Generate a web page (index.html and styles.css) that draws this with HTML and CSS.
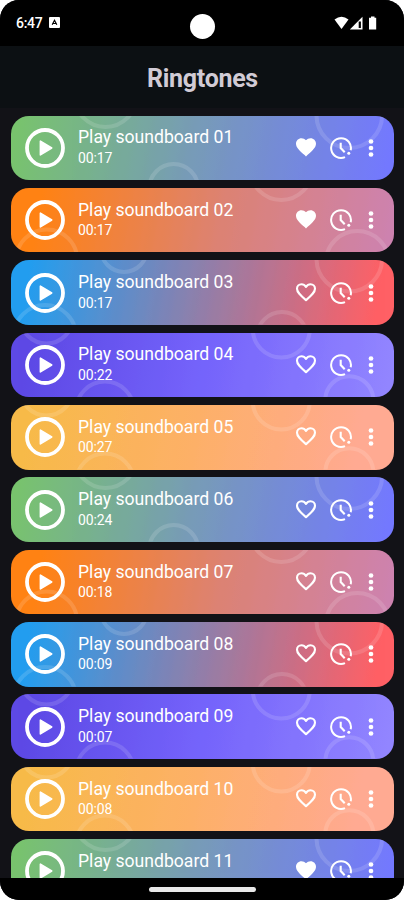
FILE: index.html
```html
<!DOCTYPE html>
<html lang="en">
<head>
<meta charset="utf-8">
<title>Ringtones</title>
<link rel="stylesheet" href="styles.css">
</head>
<body>
<svg class="defs" width="0" height="0">
  <symbol id="play" viewBox="0 0 40 40"><circle cx="20" cy="20" r="18" fill="none" stroke="#fff" stroke-width="3.8"/><path d="M15.400 13.100v13.800L26.700 20z" fill="#fff" stroke="#fff" stroke-width="1.600" stroke-linejoin="round"/></symbol>
  <symbol id="heart" viewBox="0 0 24 24"><path d="M12 20.400 10.600 19.100C5.400 14.500 2 11.400 2 7.700 2 4.600 4.400 2.200 7.500 2.200c1.700 0 3.400.8 4.500 2.100 1.100-1.300 2.800-2.100 4.500-2.100 3.100 0 5.500 2.400 5.500 5.500 0 3.700-3.400 6.800-8.600 11.400z" fill="#fff"/></symbol>
  <symbol id="heart-o" viewBox="0 0 24 24"><path d="M12 19.200C6.200 14.100 3 11.300 3 7.700c0-2.600 2-4.500 4.500-4.500 1.800 0 3.500 1.100 4.500 2.700 1-1.600 2.700-2.700 4.500-2.700C19 3.200 21 5.100 21 7.700c0 3.600-3.200 6.400-9 11.500z" fill="none" stroke="#fff" stroke-width="2.100" stroke-linejoin="round"/></symbol>
  <symbol id="clock" viewBox="0 0 24 24"><path d="M16 21.100A9.900 9.900 0 1 1 21.700 14.200" fill="none" stroke="#fff" stroke-width="2"/><path d="M11.700 6.700V12l4 4.200" fill="none" stroke="#fff" stroke-width="2.100"/><circle cx="19.800" cy="17.300" r="1.500" fill="#fff"/></symbol>
  <symbol id="more" viewBox="0 0 8 20"><g fill="#fff"><circle cx="4" cy="3.500" r="2.350"/><circle cx="4" cy="10" r="2.350"/><circle cx="4" cy="16.500" r="2.350"/></g></symbol>
  <symbol id="rings-green" viewBox="0 0 383 64.5"><circle cx="94.500" cy="-20" r="31"/><circle cx="162.700" cy="72.600" r="24.500"/><circle cx="338.300" cy="-.8" r="32.800"/></symbol>
  <symbol id="rings-orange" viewBox="0 0 383 64.5"><circle cx="270.300" cy="-19" r="31"/><circle cx="35.700" cy="72" r="30.500"/><circle cx="346.300" cy="74.500" r="31.500"/></symbol>
  <symbol id="rings-blue" viewBox="0 0 383 64.5"><circle cx="113" cy="-11" r="23"/><circle cx="34" cy="76" r="31"/><circle cx="271" cy="77" r="25"/><circle cx="338.300" cy="-1.200" r="32.800"/></symbol>
  <symbol id="rings-soft" viewBox="0 0 383 64.5"><circle cx="35.500" cy="-16" r="26.500"/><circle cx="94" cy="77.600" r="29"/><circle cx="270.300" cy="-4" r="28.500"/><circle cx="338.300" cy="67.200" r="24"/></symbol>
</svg>
<div class="phone">
  <div class="status">
    <div class="left"><span class="time">6:47</span>
      <svg width="11" height="11" viewBox="0 0 11 11"><rect width="11" height="11" rx="1" fill="#fff"/><path d="M3.200 7.800 5.500 3.300 7.800 7.800M4 6.500h3" fill="none" stroke="#000" stroke-width="1.200"/></svg>
    </div>
    <div class="camera"></div>
    <svg class="signals" width="44" height="14" viewBox="0 0 44 14"><path d="M.5 3.600Q7.500-2 14.500 3.600L7.500 13z" fill="#fff"/><path d="M28.500.8V13.500H15.800z" fill="#fff"/><path d="M24.700 5.500h2.200v6.500h-2.200z" fill="#000"/><path d="M37 .5h3.500v1.300h1.700V13.500h-7.200V1.800h2z" fill="#fff"/></svg>
  </div>
  <header class="header"><h1>Ringtones</h1></header>
  <main class="list">
    <article class="card green"><svg class="rings"><use href="#rings-green"/></svg><svg class="play"><use href="#play"/></svg><div class="info"><div class="name">Play soundboard 01</div><div class="length">00:17</div></div><svg class="heart"><use href="#heart"/></svg><svg class="clock"><use href="#clock"/></svg><svg class="more"><use href="#more"/></svg></article>
    <article class="card orange"><svg class="rings"><use href="#rings-orange"/></svg><svg class="play"><use href="#play"/></svg><div class="info"><div class="name">Play soundboard 02</div><div class="length">00:17</div></div><svg class="heart"><use href="#heart"/></svg><svg class="clock"><use href="#clock"/></svg><svg class="more"><use href="#more"/></svg></article>
    <article class="card blue"><svg class="rings"><use href="#rings-blue"/></svg><svg class="play"><use href="#play"/></svg><div class="info"><div class="name">Play soundboard 03</div><div class="length">00:17</div></div><svg class="heart"><use href="#heart-o"/></svg><svg class="clock"><use href="#clock"/></svg><svg class="more"><use href="#more"/></svg></article>
    <article class="card purple"><svg class="rings"><use href="#rings-soft"/></svg><svg class="play"><use href="#play"/></svg><div class="info"><div class="name">Play soundboard 04</div><div class="length">00:22</div></div><svg class="heart"><use href="#heart-o"/></svg><svg class="clock"><use href="#clock"/></svg><svg class="more"><use href="#more"/></svg></article>
    <article class="card yellow"><svg class="rings"><use href="#rings-soft"/></svg><svg class="play"><use href="#play"/></svg><div class="info"><div class="name">Play soundboard 05</div><div class="length">00:27</div></div><svg class="heart"><use href="#heart-o"/></svg><svg class="clock"><use href="#clock"/></svg><svg class="more"><use href="#more"/></svg></article>
    <article class="card green"><svg class="rings"><use href="#rings-green"/></svg><svg class="play"><use href="#play"/></svg><div class="info"><div class="name">Play soundboard 06</div><div class="length">00:24</div></div><svg class="heart"><use href="#heart-o"/></svg><svg class="clock"><use href="#clock"/></svg><svg class="more"><use href="#more"/></svg></article>
    <article class="card orange"><svg class="rings"><use href="#rings-orange"/></svg><svg class="play"><use href="#play"/></svg><div class="info"><div class="name">Play soundboard 07</div><div class="length">00:18</div></div><svg class="heart"><use href="#heart-o"/></svg><svg class="clock"><use href="#clock"/></svg><svg class="more"><use href="#more"/></svg></article>
    <article class="card blue"><svg class="rings"><use href="#rings-blue"/></svg><svg class="play"><use href="#play"/></svg><div class="info"><div class="name">Play soundboard 08</div><div class="length">00:09</div></div><svg class="heart"><use href="#heart-o"/></svg><svg class="clock"><use href="#clock"/></svg><svg class="more"><use href="#more"/></svg></article>
    <article class="card purple"><svg class="rings"><use href="#rings-soft"/></svg><svg class="play"><use href="#play"/></svg><div class="info"><div class="name">Play soundboard 09</div><div class="length">00:07</div></div><svg class="heart"><use href="#heart-o"/></svg><svg class="clock"><use href="#clock"/></svg><svg class="more"><use href="#more"/></svg></article>
    <article class="card yellow"><svg class="rings"><use href="#rings-soft"/></svg><svg class="play"><use href="#play"/></svg><div class="info"><div class="name">Play soundboard 10</div><div class="length">00:08</div></div><svg class="heart"><use href="#heart-o"/></svg><svg class="clock"><use href="#clock"/></svg><svg class="more"><use href="#more"/></svg></article>
    <article class="card green"><svg class="rings"><use href="#rings-green"/></svg><svg class="play"><use href="#play"/></svg><div class="info"><div class="name">Play soundboard 11</div></div><svg class="heart"><use href="#heart"/></svg><svg class="clock"><use href="#clock"/></svg><svg class="more"><use href="#more"/></svg></article>
  </main>
  <div class="nav"><div class="pill"></div></div>
</div>
</body>
</html>
```
FILE: styles.css
```css
* { box-sizing: border-box; }
body { margin: 0; background: #fff; font-family: Roboto, sans-serif; color: #fff; }
.defs { position: absolute; }
.phone { width: 404px; height: 900px; display: flex; flex-direction: column; overflow: hidden; border-radius: 19px; background: #121217; }
.status { height: 45.5px; flex: none; background: #000; display: grid; grid-template-columns: 1fr 25px 1fr; padding: 0 26px 0 16px; }
.left { display: flex; align-items: center; gap: 7px; }
.time { font-size: 14px; font-weight: 500; line-height: 16px; letter-spacing: -.3px; }
.camera { width: 25px; height: 25px; border-radius: 50%; background: #fff; margin: 14px 0 0 5px; }
.signals { justify-self: end; margin-top: 16px; }
.header { height: 62.5px; flex: none; background: #0c1013; display: flex; align-items: center; justify-content: center; }
h1 { margin: 5px 0 0 1px; font-size: 25px; line-height: 30px; font-weight: 700; letter-spacing: -.3px; color: #d1cbd5; }
.list { flex: 1; min-height: 0; overflow: hidden; display: flex; flex-direction: column; gap: 7.87px; padding: 7.6px 10px 0 11px; }
.card { position: relative; flex: none; height: 64.5px; display: flex; align-items: center; border-radius: 18px; overflow: hidden; padding: 0 19px 0 14px; }
.rings { position: absolute; left: 0; top: 0; width: 383px; height: 64.5px; fill: none; stroke: #fff; stroke-width: 4; opacity: .13; }
.play { width: 40px; height: 40px; flex: none; position: relative; }
.info { flex: 1; align-self: flex-start; padding: 11.8px 0 0 13px; position: relative; }
.name { font-size: 17.6px; line-height: 21px; white-space: nowrap; }
.length { font-size: 14px; line-height: 17px; margin-top: 1.4px; letter-spacing: -.15px; }
.heart { width: 24px; height: 24px; margin-right: 11px; position: relative; }
.clock { width: 24px; height: 24px; margin-right: 14px; position: relative; }
.more { width: 8px; height: 20px; position: relative; }
.green { background: linear-gradient(100deg, #78c36d 2%, #789bb8 48%, #7378ff 98%); }
.orange { background: linear-gradient(100deg, #ff8214 8%, #dc8274 55%, #cd82af 98%); }
.blue { background: linear-gradient(100deg, #239eef 5%, #ff6065 95%); }
.purple { background: linear-gradient(100deg, #5d49e5 5%, #7564fb 50%, #9285ff 98%); }
.yellow { background: linear-gradient(100deg, #f7ba49 5%, #fdb068 48%, #ffaa92 90%); }
.nav { height: 22.5px; flex: none; background: #000; display: flex; justify-content: center; }
.pill { width: 107px; height: 5px; margin-top: 9px; margin-left: 1px; border-radius: 3px; background: #e8e8e8; }
```
